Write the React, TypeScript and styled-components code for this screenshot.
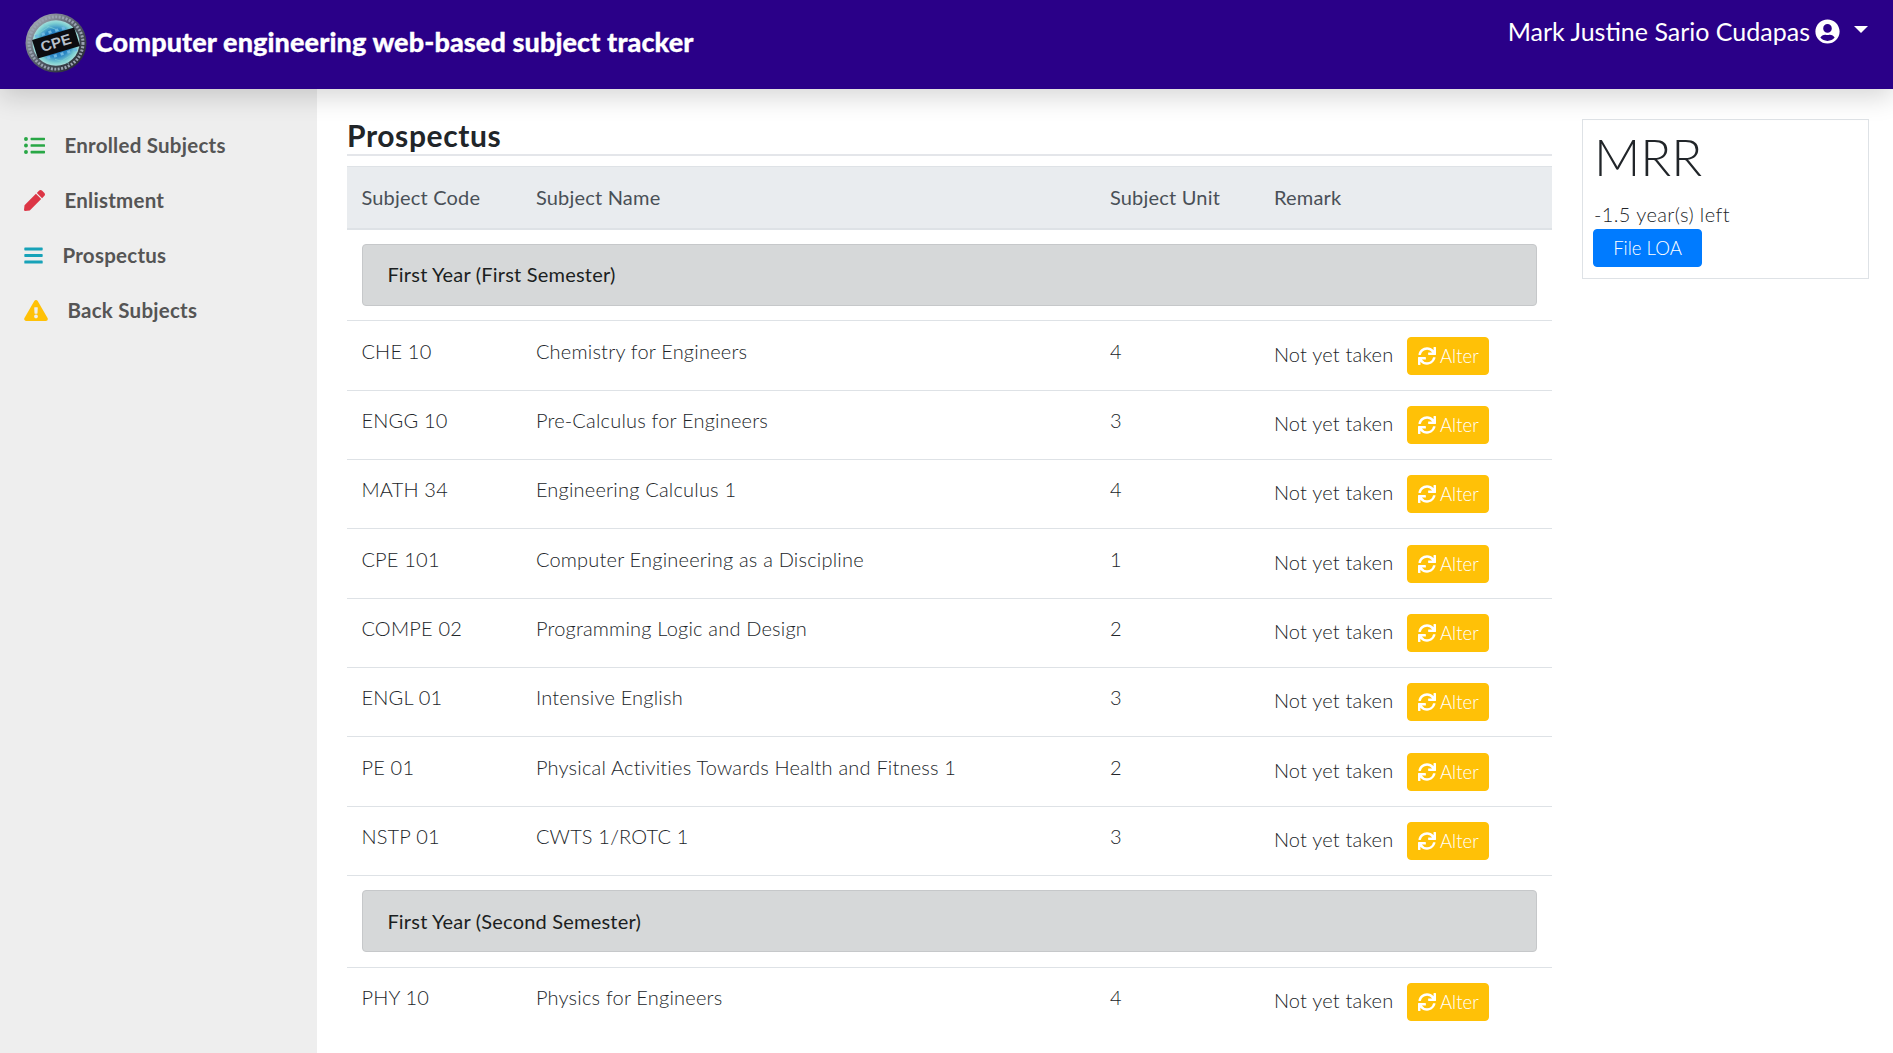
import React from 'react';
import styled, { createGlobalStyle } from 'styled-components';
import { FaBars, FaExclamationTriangle, FaListUl, FaPen, FaSync, FaUserCircle } from 'react-icons/fa';

const FONT = `Lato, 'Noto Sans', sans-serif`;

const GlobalStyle = createGlobalStyle`
  * { box-sizing: border-box; }
  html, body { margin: 0; padding: 0; height: 100%; overflow: hidden; background: #fff; }
  body {
    font-family: ${FONT};
    font-size: 20px;
    font-weight: 300;
    line-height: 28.8px;
    letter-spacing: 0.2px;
    color: #212529;
  }
`;

const Page = styled.div`
  height: 100vh;
  display: grid;
  grid-template-rows: 89px 1fr;
  overflow: hidden;
`;

const Navbar = styled.header`
  position: relative;
  z-index: 2;
  display: flex;
  justify-content: space-between;
  align-items: flex-start;
  padding: 13px 25px 0 25px;
  background: #2a0088;
  box-shadow: 0 8px 24px rgba(0, 0, 0, 0.16);
`;

const Brand = styled.div`
  display: flex;
  align-items: center;
  gap: 8px;
`;

const BrandTitle = styled.span`
  padding-bottom: 3px;
  font-size: 27px;
  line-height: 36px;
  font-weight: 900;
  color: #fff;
  letter-spacing: 0.1px;
  -webkit-text-stroke: 0.3px #fff;
`;

const UserMenu = styled.div`
  display: flex;
  align-items: center;
  font-size: 25px;
  line-height: 36px;
  font-weight: 400;
  letter-spacing: 0;
  color: #fff;
  svg { margin-left: 5px; font-size: 25px; }
`;

const Caret = styled.span`
  width: 0;
  height: 0;
  margin: 0 0 4px 14px;
  border-top: 7px solid #fff;
  border-left: 7px solid transparent;
  border-right: 7px solid transparent;
`;

const Body = styled.div`
  display: grid;
  grid-template-columns: 317px 1fr;
  min-height: 0;
`;

const Sidebar = styled.nav`
  display: flex;
  flex-direction: column;
  gap: 22.1px;
  padding: 40px 0 0 24px;
  background: #eeeeee;
`;

const NavItem = styled.a`
  display: flex;
  align-items: center;
  gap: 19.5px;
  height: 33px;
  font-size: 20.5px;
  font-weight: 700;
  letter-spacing: 0.25px;
  color: #555;
`;

const NavGlyph = styled.span<{ $width: number; $color: string }>`
  display: flex;
  width: ${({ $width }) => $width}px;
  color: ${({ $color }) => $color};
  svg { width: 100%; height: 21px; }
`;

const Content = styled.div`
  display: grid;
  grid-template-columns: 1205px 287px;
  column-gap: 30px;
  align-items: start;
  padding: 0 24px 0 30px;
  min-height: 0;
`;

const Heading = styled.h1`
  margin: 0 0 10px;
  padding-top: 27px;
  height: 67px;
  border-bottom: 2px solid #e4e6ea;
  font-size: 30px;
  font-weight: 700;
  line-height: 38px;
  letter-spacing: 0.6px;
  color: #212529;
`;

const Table = styled.table`
  width: 100%;
  table-layout: fixed;
  border-collapse: collapse;
`;

const HeadCell = styled.th<{ $width: number }>`
  width: ${({ $width }) => $width}px;
  height: 62px;
  padding: 0 14.4px;
  text-align: left;
  font-weight: 400;
  color: #495057;
  background: #e9ecef;
  border-top: 1px solid #dee2e6;
  border-bottom: 2px solid #dee2e6;
`;

const Cell = styled.td`
  padding: 15.4px 14.4px 13.4px;
  height: 69.33px;
  vertical-align: top;
  border-top: 1px solid #dee2e6;
`;

const GroupCell = styled.td`
  padding: 14.4px 15.4px;
  border-top: 1px solid #dee2e6;
`;

const GroupBar = styled.div`
  padding: 15.5px 24px;
  height: 62px;
  background: #d6d8d9;
  border: 1px solid #c6c8ca;
  border-radius: 4px;
  font-weight: 400;
  color: #1b1e21;
`;

const Remark = styled.div`
  display: flex;
  align-items: flex-start;
  gap: 14px;
  height: 39px;
`;

const RemarkText = styled.span`
  line-height: 34px;
`;

const ActionButton = styled.button<{ $color: string }>`
  display: inline-flex;
  align-items: center;
  justify-content: center;
  height: 38px;
  border: 1px solid ${({ $color }) => $color};
  border-radius: 4px;
  font-family: ${FONT};
  font-size: 18.6px;
  font-weight: 300;
  color: #fff;
  background: ${({ $color }) => $color};
`;

const AlterButton = styled(ActionButton)`
  gap: 4px;
  width: 82px;
  padding: 0;
  svg { font-size: 18px; }
`;

const LoaButton = styled(ActionButton)`
  width: 109px;
  padding: 0;
`;

const Card = styled.aside`
  margin-top: 30px;
  height: 160px;
  padding: 7px 10px 10px;
  border: 1px solid #dee2e6;
`;

const CardTitle = styled.div`
  padding-left: 1px;
  font-size: 51px;
  font-weight: 300;
  line-height: 60px;
  letter-spacing: 0;
  color: #212529;
`;

const CardText = styled.div`
  padding-left: 1px;
  margin-top: 13px;
  line-height: 29px;
  letter-spacing: 0.4px;
`;

const Logo = () => (
  <svg width="62" height="60" viewBox="0 0 62 62" preserveAspectRatio="none" aria-hidden="true">
    <defs>
      <radialGradient id="logoCore" cx="50%" cy="50%" r="50%">
        <stop offset="0%" stopColor="#1c64b0" />
        <stop offset="60%" stopColor="#2a86c4" />
        <stop offset="88%" stopColor="#7fd0d2" />
        <stop offset="100%" stopColor="#a6dedc" />
      </radialGradient>
      <linearGradient id="logoRing" x1="0" y1="0" x2="1" y2="1">
        <stop offset="0%" stopColor="#b9bfc8" />
        <stop offset="50%" stopColor="#545c68" />
        <stop offset="100%" stopColor="#1a1d24" />
      </linearGradient>
    </defs>
    <circle cx="31" cy="31" r="30.5" fill="url(#logoRing)" />
    <circle cx="31" cy="31" r="27" fill="none" stroke="#9aa3b1" strokeWidth="3" strokeDasharray="2 1.5" />
    <circle cx="31" cy="31" r="23.5" fill="url(#logoCore)" />
    <g stroke="#7fd0d2" strokeWidth="0.7" fill="none">
      <path d="M12 22 L24 14 M18 12 L34 18 M44 12 L52 26 M10 38 L22 50 M36 50 L52 40 M30 48 L44 52" />
    </g>
    <g transform="rotate(-17 31 31)">
      <rect x="9" y="21" width="44" height="20" fill="#0c0c10" />
      <g fill="#6fb9e2">
        <rect x="13" y="17" width="3" height="3" />
        <rect x="20" y="17" width="3" height="3" />
        <rect x="27" y="17" width="3" height="3" />
        <rect x="34" y="17" width="3" height="3" />
        <rect x="41" y="17" width="3" height="3" />
        <rect x="18" y="42" width="3" height="3" />
        <rect x="25" y="42" width="3" height="3" />
        <rect x="32" y="42" width="3" height="3" />
        <rect x="39" y="42" width="3" height="3" />
        <rect x="46" y="42" width="3" height="3" />
      </g>
      <text x="31" y="36" textAnchor="middle" fontFamily="'Liberation Sans', sans-serif" fontSize="15" fontWeight="700" fill="#b9c0ca">
        CPE
      </text>
    </g>
  </svg>
);

const NAV_ITEMS = [
  { label: 'Enrolled Subjects', Icon: FaListUl, width: 21, color: '#28a745' },
  { label: 'Enlistment', Icon: FaPen, width: 21, color: '#dc3545' },
  { label: 'Prospectus', Icon: FaBars, width: 19, color: '#17a2b8' },
  { label: 'Back Subjects', Icon: FaExclamationTriangle, width: 24, color: '#ffc107' },
];

const COLUMNS = [
  { label: 'Subject Code', width: 174.5 },
  { label: 'Subject Name', width: 574 },
  { label: 'Subject Unit', width: 164 },
  { label: 'Remark', width: 292.5 },
];

const GROUPS = [
  {
    title: 'First Year (First Semester)',
    subjects: [
      ['CHE 10', 'Chemistry for Engineers', 4],
      ['ENGG 10', 'Pre-Calculus for Engineers', 3],
      ['MATH 34', 'Engineering Calculus 1', 4],
      ['CPE 101', 'Computer Engineering as a Discipline', 1],
      ['COMPE 02', 'Programming Logic and Design', 2],
      ['ENGL 01', 'Intensive English', 3],
      ['PE 01', 'Physical Activities Towards Health and Fitness 1', 2],
      ['NSTP 01', 'CWTS 1/ROTC 1', 3],
    ],
  },
  {
    title: 'First Year (Second Semester)',
    subjects: [['PHY 10', 'Physics for Engineers', 4]],
  },
];

export default function App() {
  return (
    <Page>
      <GlobalStyle />
      <Navbar>
        <Brand>
          <Logo />
          <BrandTitle>Computer engineering web-based subject tracker</BrandTitle>
        </Brand>
        <UserMenu>
          Mark Justine Sario Cudapas
          <FaUserCircle />
          <Caret />
        </UserMenu>
      </Navbar>
      <Body>
        <Sidebar>
          {NAV_ITEMS.map(({ label, Icon, width, color }) => (
            <NavItem key={label}>
              <NavGlyph $width={width} $color={color}>
                <Icon />
              </NavGlyph>
              {label}
            </NavItem>
          ))}
        </Sidebar>
        <Content>
          <main>
            <Heading>Prospectus</Heading>
            <Table>
              <thead>
                <tr>
                  {COLUMNS.map((col) => (
                    <HeadCell key={col.label} $width={col.width}>
                      {col.label}
                    </HeadCell>
                  ))}
                </tr>
              </thead>
              {GROUPS.map((group) => (
                <tbody key={group.title}>
                  <tr>
                    <GroupCell colSpan={4}>
                      <GroupBar>{group.title}</GroupBar>
                    </GroupCell>
                  </tr>
                  {group.subjects.map(([code, name, units]) => (
                    <tr key={code}>
                      <Cell>{code}</Cell>
                      <Cell>{name}</Cell>
                      <Cell>{units}</Cell>
                      <Cell>
                        <Remark>
                          <RemarkText>Not yet taken</RemarkText>
                          <AlterButton $color="#ffc107">
                            <FaSync />
                            Alter
                          </AlterButton>
                        </Remark>
                      </Cell>
                    </tr>
                  ))}
                </tbody>
              ))}
            </Table>
          </main>
          <Card>
            <CardTitle>MRR</CardTitle>
            <CardText>-1.5 year(s) left</CardText>
            <LoaButton $color="#007bff">File LOA</LoaButton>
          </Card>
        </Content>
      </Body>
    </Page>
  );
}
